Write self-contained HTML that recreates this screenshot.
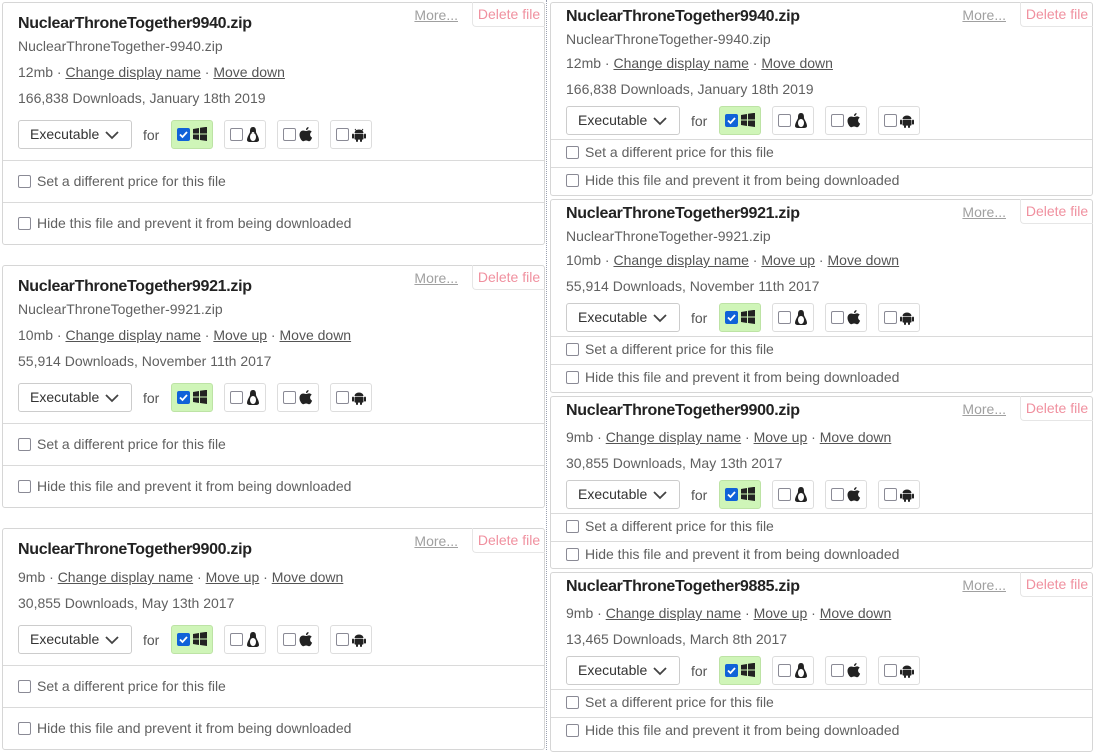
<!DOCTYPE html>
<html><head><meta charset="utf-8"><style>
body{margin:0;width:1095px;height:750px;background:#fff;position:relative;overflow:hidden;font-family:"Liberation Sans",sans-serif;color:#606060;font-size:14px}
.card{position:absolute;border:1px solid #d6d6d6;border-radius:3px;background:#fff;box-sizing:border-box}
.card>div{position:absolute;left:15px;line-height:20px;white-space:nowrap}
.t{font-weight:bold;font-size:16px;color:#222;letter-spacing:-0.3px}
.m a{color:#555;text-decoration:underline}
.hr{left:0!important;right:0;height:0;border-top:1px solid #dadada}
.cb{display:inline-block;width:11px;height:11px;border:1.5px solid #8a8a95;border-radius:2px;vertical-align:-2px;margin-right:6px;background:#fff}
.more{left:auto!important;right:86px;top:2px;color:#a0a0a0;text-decoration:underline}
.del{left:auto!important;right:-1px;top:-1px;width:72px;height:24px;border:1px solid #e6e6e6;border-top:none;border-right:none;border-radius:0 0 0 4px;color:#f0909f;text-align:center;line-height:24px!important}
.ctl{height:30px}
.sel{position:absolute;left:0;top:0;width:111px;height:27px;border:1.5px solid #ccc;border-radius:3px;color:#333;line-height:27px;padding-left:11px;box-sizing:content-box;width:101px}
.sel svg{position:absolute;right:12px;top:10px}
.for{position:absolute;left:125px;top:5px;color:#555}
.pb{position:absolute;top:0;width:40px;height:27px;border:1px solid #ddd;border-radius:3px;background:#fff}
.pb .cb{position:absolute;left:5px;top:7px;margin:0}
.pb svg{position:absolute;left:21px;top:6px}
.pb.on{background:#cff5b8;border-color:#bde3a5}
.pb.on .cb{background:#1062d8;border-color:#1062d8}
.dots{position:absolute;left:546px;top:0;height:750px;border-left:1px dotted #9aa0b0}
</style></head><body>
<div class="dots"></div>

<!-- controls template repeated -->
<!-- LEFT 1 -->
<div class="card" style="left:2px;top:2px;width:543px;height:243px">
<div class="more">More...</div><div class="del">Delete file</div>
<div class="t" style="top:11px">NuclearThroneTogether9940.zip</div>
<div style="top:33px">NuclearThroneTogether-9940.zip</div>
<div class="m" style="top:59px">12mb · <a>Change display name</a> · <a>Move down</a></div>
<div style="top:85px">166,838 Downloads, January 18th 2019</div>
<div class="ctl" style="top:117px">
<div class="sel">Executable<svg width="14" height="9"><path d="M1 1l6 6 6-6" stroke="#444" stroke-width="1.8" fill="none"/></svg></div><span class="for">for</span>
<div class="pb on" style="left:153px"><span class="cb"><svg width="11" height="11" style="position:absolute;left:0;top:0"><path d="M2 5.5l2.5 2.5 4.5-5" stroke="#fff" stroke-width="1.8" fill="none"/></svg></span><svg width="14" height="14"><path d="M0 2l6-1v5.5H0zM7 .8l7-1v6.7H7zM0 7.5h6V13L0 12zM7 7.5h7v6.5l-7-1z" fill="#222"/></svg></div>
<div class="pb" style="left:206px"><span class="cb"></span><svg width="14" height="15"><path d="M7 0C4 0 4 3 4 5c0 1-3 5-3 8 0 1 1 2 3 2h6c2 0 3-1 3-2 0-3-3-7-3-8 0-2 0-5-3-5z" fill="#222"/><ellipse cx="7" cy="10" rx="3" ry="4" fill="#fff"/><path d="M5.5 5h3l-1.5 1.5z" fill="#fff"/></svg></div>
<div class="pb" style="left:259px"><span class="cb"></span><svg width="14" height="15"><path d="M9.5 0c.2 1.5-1 3-2.5 3-.2-1.4 1.1-2.9 2.5-3zM7 4c1 0 2-.8 3.3-.6 1 .1 1.9.6 2.4 1.4-2.4 1.5-2 4.8.4 5.8-.6 1.5-1.5 3.6-3 3.6-1.2 0-1.5-.7-3-.7s-1.9.7-3 .7C2.500 14 .5 10.600 .5 8 .5 5 2.400 3.500 4.200 3.500 5.300 3.500 6.200 4 7 4z" fill="#222"/></svg></div>
<div class="pb" style="left:312px"><span class="cb"></span><svg width="14" height="15"><path d="M3 2l1.5 2M11 2L9.5 4" stroke="#222" stroke-width="1"/><path d="M2.5 6a4.5 3.5 0 0 1 9 0z" fill="#222"/><rect x="2.5" y="6.6" width="9" height="6" rx="1" fill="#222"/><rect x="0" y="6.6" width="2" height="5" rx="1" fill="#222"/><rect x="12" y="6.6" width="2" height="5" rx="1" fill="#222"/><rect x="4" y="12" width="2" height="3" rx="1" fill="#222"/><rect x="8" y="12" width="2" height="3" rx="1" fill="#222"/></svg></div>
</div>
<div class="hr" style="top:157px"></div>
<div style="top:168px"><span class="cb"></span>Set a different price for this file</div>
<div class="hr" style="top:199px"></div>
<div style="top:210px"><span class="cb"></span>Hide this file and prevent it from being downloaded</div>
</div>

<!-- LEFT 2 -->
<div class="card" style="left:2px;top:265px;width:543px;height:243px">
<div class="more">More...</div><div class="del">Delete file</div>
<div class="t" style="top:11px">NuclearThroneTogether9921.zip</div>
<div style="top:33px">NuclearThroneTogether-9921.zip</div>
<div class="m" style="top:59px">10mb · <a>Change display name</a> · <a>Move up</a> · <a>Move down</a></div>
<div style="top:85px">55,914 Downloads, November 11th 2017</div>
<div class="ctl" style="top:117px">
<div class="sel">Executable<svg width="14" height="9"><path d="M1 1l6 6 6-6" stroke="#444" stroke-width="1.8" fill="none"/></svg></div><span class="for">for</span>
<div class="pb on" style="left:153px"><span class="cb"><svg width="11" height="11" style="position:absolute;left:0;top:0"><path d="M2 5.5l2.5 2.5 4.5-5" stroke="#fff" stroke-width="1.8" fill="none"/></svg></span><svg width="14" height="14"><path d="M0 2l6-1v5.5H0zM7 .8l7-1v6.7H7zM0 7.5h6V13L0 12zM7 7.5h7v6.5l-7-1z" fill="#222"/></svg></div>
<div class="pb" style="left:206px"><span class="cb"></span><svg width="14" height="15"><path d="M7 0C4 0 4 3 4 5c0 1-3 5-3 8 0 1 1 2 3 2h6c2 0 3-1 3-2 0-3-3-7-3-8 0-2 0-5-3-5z" fill="#222"/><ellipse cx="7" cy="10" rx="3" ry="4" fill="#fff"/></svg></div>
<div class="pb" style="left:259px"><span class="cb"></span><svg width="14" height="15"><path d="M9.5 0c.2 1.5-1 3-2.5 3-.2-1.4 1.1-2.9 2.5-3zM7 4c1 0 2-.8 3.3-.6 1 .1 1.9.6 2.4 1.4-2.4 1.5-2 4.8.4 5.8-.6 1.5-1.5 3.6-3 3.6-1.2 0-1.5-.7-3-.7s-1.9.7-3 .7C2.5 14 .5 10.6.5 8 .5 5 2.4 3.5 4.2 3.5 5.3 3.5 6.2 4 7 4z" fill="#222"/></svg></div>
<div class="pb" style="left:312px"><span class="cb"></span><svg width="14" height="15"><path d="M2.5 6a4.5 3.5 0 0 1 9 0z" fill="#222"/><rect x="2.5" y="6.6" width="9" height="6" rx="1" fill="#222"/><rect x="0" y="6.6" width="2" height="5" rx="1" fill="#222"/><rect x="12" y="6.6" width="2" height="5" rx="1" fill="#222"/><rect x="4" y="12" width="2" height="3" rx="1" fill="#222"/><rect x="8" y="12" width="2" height="3" rx="1" fill="#222"/></svg></div>
</div>
<div class="hr" style="top:157px"></div>
<div style="top:168px"><span class="cb"></span>Set a different price for this file</div>
<div class="hr" style="top:199px"></div>
<div style="top:210px"><span class="cb"></span>Hide this file and prevent it from being downloaded</div>
</div>

<!-- LEFT 3 -->
<div class="card" style="left:2px;top:528px;width:543px;height:222px">
<div class="more">More...</div><div class="del">Delete file</div>
<div class="t" style="top:11px">NuclearThroneTogether9900.zip</div>
<div class="m" style="top:38px">9mb · <a>Change display name</a> · <a>Move up</a> · <a>Move down</a></div>
<div style="top:64px">30,855 Downloads, May 13th 2017</div>
<div class="ctl" style="top:96px">
<div class="sel">Executable<svg width="14" height="9"><path d="M1 1l6 6 6-6" stroke="#444" stroke-width="1.8" fill="none"/></svg></div><span class="for">for</span>
<div class="pb on" style="left:153px"><span class="cb"><svg width="11" height="11" style="position:absolute;left:0;top:0"><path d="M2 5.5l2.5 2.5 4.5-5" stroke="#fff" stroke-width="1.8" fill="none"/></svg></span><svg width="14" height="14"><path d="M0 2l6-1v5.5H0zM7 .8l7-1v6.7H7zM0 7.5h6V13L0 12zM7 7.5h7v6.5l-7-1z" fill="#222"/></svg></div>
<div class="pb" style="left:206px"><span class="cb"></span><svg width="14" height="15"><path d="M7 0C4 0 4 3 4 5c0 1-3 5-3 8 0 1 1 2 3 2h6c2 0 3-1 3-2 0-3-3-7-3-8 0-2 0-5-3-5z" fill="#222"/><ellipse cx="7" cy="10" rx="3" ry="4" fill="#fff"/></svg></div>
<div class="pb" style="left:259px"><span class="cb"></span><svg width="14" height="15"><path d="M9.5 0c.2 1.5-1 3-2.5 3-.2-1.4 1.1-2.9 2.5-3zM7 4c1 0 2-.8 3.3-.6 1 .1 1.9.6 2.4 1.4-2.4 1.5-2 4.8.4 5.8-.6 1.5-1.5 3.6-3 3.6-1.2 0-1.5-.7-3-.7s-1.9.7-3 .7C2.5 14 .5 10.6.5 8 .5 5 2.4 3.5 4.2 3.5 5.3 3.5 6.2 4 7 4z" fill="#222"/></svg></div>
<div class="pb" style="left:312px"><span class="cb"></span><svg width="14" height="15"><path d="M2.5 6a4.5 3.5 0 0 1 9 0z" fill="#222"/><rect x="2.5" y="6.6" width="9" height="6" rx="1" fill="#222"/><rect x="0" y="6.6" width="2" height="5" rx="1" fill="#222"/><rect x="12" y="6.6" width="2" height="5" rx="1" fill="#222"/><rect x="4" y="12" width="2" height="3" rx="1" fill="#222"/><rect x="8" y="12" width="2" height="3" rx="1" fill="#222"/></svg></div>
</div>
<div class="hr" style="top:136px"></div>
<div style="top:147px"><span class="cb"></span>Set a different price for this file</div>
<div class="hr" style="top:178px"></div>
<div style="top:189px"><span class="cb"></span>Hide this file and prevent it from being downloaded</div>
</div>

<!-- RIGHT 1 -->
<div class="card" style="left:550px;top:2px;width:543px;height:194px">
<div class="more">More...</div><div class="del">Delete file</div>
<div class="t" style="top:4px">NuclearThroneTogether9940.zip</div>
<div style="top:26px">NuclearThroneTogether-9940.zip</div>
<div class="m" style="top:50px">12mb · <a>Change display name</a> · <a>Move down</a></div>
<div style="top:76px">166,838 Downloads, January 18th 2019</div>
<div class="ctl" style="top:103px">
<div class="sel">Executable<svg width="14" height="9"><path d="M1 1l6 6 6-6" stroke="#444" stroke-width="1.8" fill="none"/></svg></div><span class="for">for</span>
<div class="pb on" style="left:153px"><span class="cb"><svg width="11" height="11" style="position:absolute;left:0;top:0"><path d="M2 5.5l2.5 2.5 4.5-5" stroke="#fff" stroke-width="1.8" fill="none"/></svg></span><svg width="14" height="14"><path d="M0 2l6-1v5.5H0zM7 .8l7-1v6.7H7zM0 7.5h6V13L0 12zM7 7.5h7v6.5l-7-1z" fill="#222"/></svg></div>
<div class="pb" style="left:206px"><span class="cb"></span><svg width="14" height="15"><path d="M7 0C4 0 4 3 4 5c0 1-3 5-3 8 0 1 1 2 3 2h6c2 0 3-1 3-2 0-3-3-7-3-8 0-2 0-5-3-5z" fill="#222"/><ellipse cx="7" cy="10" rx="3" ry="4" fill="#fff"/></svg></div>
<div class="pb" style="left:259px"><span class="cb"></span><svg width="14" height="15"><path d="M9.5 0c.2 1.5-1 3-2.5 3-.2-1.4 1.1-2.9 2.5-3zM7 4c1 0 2-.8 3.3-.6 1 .1 1.9.6 2.4 1.4-2.4 1.5-2 4.8.4 5.8-.6 1.5-1.5 3.6-3 3.6-1.2 0-1.5-.7-3-.7s-1.9.7-3 .7C2.5 14 .5 10.6.5 8 .5 5 2.4 3.5 4.2 3.5 5.3 3.5 6.2 4 7 4z" fill="#222"/></svg></div>
<div class="pb" style="left:312px"><span class="cb"></span><svg width="14" height="15"><path d="M2.5 6a4.5 3.5 0 0 1 9 0z" fill="#222"/><rect x="2.5" y="6.6" width="9" height="6" rx="1" fill="#222"/><rect x="0" y="6.6" width="2" height="5" rx="1" fill="#222"/><rect x="12" y="6.6" width="2" height="5" rx="1" fill="#222"/><rect x="4" y="12" width="2" height="3" rx="1" fill="#222"/><rect x="8" y="12" width="2" height="3" rx="1" fill="#222"/></svg></div>
</div>
<div class="hr" style="top:136px"></div>
<div style="top:139px"><span class="cb"></span>Set a different price for this file</div>
<div class="hr" style="top:164px"></div>
<div style="top:167px"><span class="cb"></span>Hide this file and prevent it from being downloaded</div>
</div>

<!-- RIGHT 2 -->
<div class="card" style="left:550px;top:199px;width:543px;height:194px">
<div class="more">More...</div><div class="del">Delete file</div>
<div class="t" style="top:4px">NuclearThroneTogether9921.zip</div>
<div style="top:26px">NuclearThroneTogether-9921.zip</div>
<div class="m" style="top:50px">10mb · <a>Change display name</a> · <a>Move up</a> · <a>Move down</a></div>
<div style="top:76px">55,914 Downloads, November 11th 2017</div>
<div class="ctl" style="top:103px">
<div class="sel">Executable<svg width="14" height="9"><path d="M1 1l6 6 6-6" stroke="#444" stroke-width="1.8" fill="none"/></svg></div><span class="for">for</span>
<div class="pb on" style="left:153px"><span class="cb"><svg width="11" height="11" style="position:absolute;left:0;top:0"><path d="M2 5.5l2.5 2.5 4.5-5" stroke="#fff" stroke-width="1.8" fill="none"/></svg></span><svg width="14" height="14"><path d="M0 2l6-1v5.5H0zM7 .8l7-1v6.7H7zM0 7.5h6V13L0 12zM7 7.5h7v6.5l-7-1z" fill="#222"/></svg></div>
<div class="pb" style="left:206px"><span class="cb"></span><svg width="14" height="15"><path d="M7 0C4 0 4 3 4 5c0 1-3 5-3 8 0 1 1 2 3 2h6c2 0 3-1 3-2 0-3-3-7-3-8 0-2 0-5-3-5z" fill="#222"/><ellipse cx="7" cy="10" rx="3" ry="4" fill="#fff"/></svg></div>
<div class="pb" style="left:259px"><span class="cb"></span><svg width="14" height="15"><path d="M9.5 0c.2 1.5-1 3-2.5 3-.2-1.4 1.1-2.9 2.5-3zM7 4c1 0 2-.8 3.3-.6 1 .1 1.9.6 2.4 1.4-2.4 1.5-2 4.8.4 5.8-.6 1.5-1.5 3.6-3 3.6-1.2 0-1.5-.7-3-.7s-1.9.7-3 .7C2.5 14 .5 10.6.5 8 .5 5 2.4 3.5 4.2 3.5 5.3 3.5 6.2 4 7 4z" fill="#222"/></svg></div>
<div class="pb" style="left:312px"><span class="cb"></span><svg width="14" height="15"><path d="M2.5 6a4.5 3.5 0 0 1 9 0z" fill="#222"/><rect x="2.5" y="6.6" width="9" height="6" rx="1" fill="#222"/><rect x="0" y="6.6" width="2" height="5" rx="1" fill="#222"/><rect x="12" y="6.6" width="2" height="5" rx="1" fill="#222"/><rect x="4" y="12" width="2" height="3" rx="1" fill="#222"/><rect x="8" y="12" width="2" height="3" rx="1" fill="#222"/></svg></div>
</div>
<div class="hr" style="top:136px"></div>
<div style="top:139px"><span class="cb"></span>Set a different price for this file</div>
<div class="hr" style="top:164px"></div>
<div style="top:167px"><span class="cb"></span>Hide this file and prevent it from being downloaded</div>
</div>

<!-- RIGHT 3 -->
<div class="card" style="left:550px;top:396px;width:543px;height:173px">
<div class="more">More...</div><div class="del">Delete file</div>
<div class="t" style="top:4px">NuclearThroneTogether9900.zip</div>
<div class="m" style="top:30px">9mb · <a>Change display name</a> · <a>Move up</a> · <a>Move down</a></div>
<div style="top:56px">30,855 Downloads, May 13th 2017</div>
<div class="ctl" style="top:83px">
<div class="sel">Executable<svg width="14" height="9"><path d="M1 1l6 6 6-6" stroke="#444" stroke-width="1.8" fill="none"/></svg></div><span class="for">for</span>
<div class="pb on" style="left:153px"><span class="cb"><svg width="11" height="11" style="position:absolute;left:0;top:0"><path d="M2 5.5l2.5 2.5 4.5-5" stroke="#fff" stroke-width="1.8" fill="none"/></svg></span><svg width="14" height="14"><path d="M0 2l6-1v5.5H0zM7 .8l7-1v6.7H7zM0 7.5h6V13L0 12zM7 7.5h7v6.5l-7-1z" fill="#222"/></svg></div>
<div class="pb" style="left:206px"><span class="cb"></span><svg width="14" height="15"><path d="M7 0C4 0 4 3 4 5c0 1-3 5-3 8 0 1 1 2 3 2h6c2 0 3-1 3-2 0-3-3-7-3-8 0-2 0-5-3-5z" fill="#222"/><ellipse cx="7" cy="10" rx="3" ry="4" fill="#fff"/></svg></div>
<div class="pb" style="left:259px"><span class="cb"></span><svg width="14" height="15"><path d="M9.5 0c.2 1.5-1 3-2.5 3-.2-1.4 1.1-2.9 2.5-3zM7 4c1 0 2-.8 3.3-.6 1 .1 1.9.6 2.4 1.4-2.4 1.5-2 4.8.4 5.8-.6 1.5-1.5 3.6-3 3.6-1.2 0-1.5-.7-3-.7s-1.9.7-3 .7C2.5 14 .5 10.6.5 8 .5 5 2.4 3.5 4.2 3.5 5.3 3.5 6.2 4 7 4z" fill="#222"/></svg></div>
<div class="pb" style="left:312px"><span class="cb"></span><svg width="14" height="15"><path d="M2.5 6a4.5 3.5 0 0 1 9 0z" fill="#222"/><rect x="2.5" y="6.6" width="9" height="6" rx="1" fill="#222"/><rect x="0" y="6.6" width="2" height="5" rx="1" fill="#222"/><rect x="12" y="6.6" width="2" height="5" rx="1" fill="#222"/><rect x="4" y="12" width="2" height="3" rx="1" fill="#222"/><rect x="8" y="12" width="2" height="3" rx="1" fill="#222"/></svg></div>
</div>
<div class="hr" style="top:116px"></div>
<div style="top:119px"><span class="cb"></span>Set a different price for this file</div>
<div class="hr" style="top:144px"></div>
<div style="top:147px"><span class="cb"></span>Hide this file and prevent it from being downloaded</div>
</div>

<!-- RIGHT 4 -->
<div class="card" style="left:550px;top:572px;width:543px;height:180px">
<div class="more">More...</div><div class="del">Delete file</div>
<div class="t" style="top:4px">NuclearThroneTogether9885.zip</div>
<div class="m" style="top:30px">9mb · <a>Change display name</a> · <a>Move up</a> · <a>Move down</a></div>
<div style="top:56px">13,465 Downloads, March 8th 2017</div>
<div class="ctl" style="top:83px">
<div class="sel">Executable<svg width="14" height="9"><path d="M1 1l6 6 6-6" stroke="#444" stroke-width="1.8" fill="none"/></svg></div><span class="for">for</span>
<div class="pb on" style="left:153px"><span class="cb"><svg width="11" height="11" style="position:absolute;left:0;top:0"><path d="M2 5.5l2.5 2.5 4.5-5" stroke="#fff" stroke-width="1.8" fill="none"/></svg></span><svg width="14" height="14"><path d="M0 2l6-1v5.5H0zM7 .8l7-1v6.7H7zM0 7.5h6V13L0 12zM7 7.5h7v6.5l-7-1z" fill="#222"/></svg></div>
<div class="pb" style="left:206px"><span class="cb"></span><svg width="14" height="15"><path d="M7 0C4 0 4 3 4 5c0 1-3 5-3 8 0 1 1 2 3 2h6c2 0 3-1 3-2 0-3-3-7-3-8 0-2 0-5-3-5z" fill="#222"/><ellipse cx="7" cy="10" rx="3" ry="4" fill="#fff"/></svg></div>
<div class="pb" style="left:259px"><span class="cb"></span><svg width="14" height="15"><path d="M9.5 0c.2 1.5-1 3-2.5 3-.2-1.4 1.1-2.9 2.5-3zM7 4c1 0 2-.8 3.3-.6 1 .1 1.9.6 2.4 1.4-2.4 1.5-2 4.8.4 5.8-.6 1.5-1.5 3.6-3 3.6-1.2 0-1.5-.7-3-.7s-1.9.7-3 .7C2.5 14 .5 10.6.5 8 .5 5 2.4 3.5 4.2 3.5 5.3 3.5 6.2 4 7 4z" fill="#222"/></svg></div>
<div class="pb" style="left:312px"><span class="cb"></span><svg width="14" height="15"><path d="M2.5 6a4.5 3.5 0 0 1 9 0z" fill="#222"/><rect x="2.5" y="6.6" width="9" height="6" rx="1" fill="#222"/><rect x="0" y="6.6" width="2" height="5" rx="1" fill="#222"/><rect x="12" y="6.6" width="2" height="5" rx="1" fill="#222"/><rect x="4" y="12" width="2" height="3" rx="1" fill="#222"/><rect x="8" y="12" width="2" height="3" rx="1" fill="#222"/></svg></div>
</div>
<div class="hr" style="top:116px"></div>
<div style="top:119px"><span class="cb"></span>Set a different price for this file</div>
<div class="hr" style="top:144px"></div>
<div style="top:147px"><span class="cb"></span>Hide this file and prevent it from being downloaded</div>
</div>
</body></html>
